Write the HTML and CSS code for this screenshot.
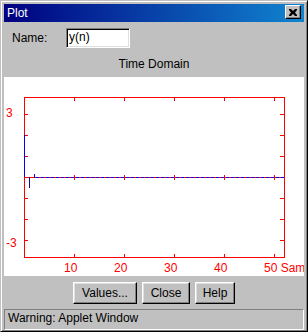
FILE: index.html
```html
<!DOCTYPE html>
<html>
<head>
<meta charset="utf-8">
<link rel="stylesheet" href="styles.css">
</head>
<body>
<div class="window">
  <div class="titlebar">
    <span class="title">Plot</span>
    <span class="close-btn"><svg width="8" height="7" viewBox="0 0 8 7"><path d="M0 0h2l2 2 2-2h2v1L6 3.5 8 6v1H6L4 5 2 7H0V6l2-2.5L0 1z" fill="#000"/></svg></span>
  </div>
  <div class="name-row">
    <span class="name-label">Name:</span>
    <span class="field">y(n)</span>
  </div>
  <div class="heading">Time Domain</div>
  <div class="canvas">
    <svg class="plot" width="300" height="199" viewBox="4 77 300 199">
      <g stroke="#ff0000" stroke-width="1" fill="none" shape-rendering="crispEdges">
        <path d="M24.5 97.5H284.5V257.5H24.5Z"/>
        <path d="M24.5 177.5H284.5"/>
        <path d="M24 114.5h4M24 135.5h4M24 156.5h4M24 198.5h4M24 219.5h4M24 240.5h4"/>
        <path d="M280 114.5h4M280 135.5h4M280 156.5h4M280 198.5h4M280 219.5h4M280 240.5h4"/>
        <path d="M74.5 97v4M124.5 97v4M174.5 97v4M224.5 97v4M274.5 97v4"/>
        <path d="M74.5 254v4M124.5 254v4M174.5 254v4M224.5 254v4M274.5 254v4"/>
        <path d="M74.5 175v5M124.5 175v5M174.5 175v5M224.5 175v5M274.5 175v5"/>
      </g>
      <g stroke="#0000ff" stroke-width="1" fill="none" shape-rendering="crispEdges">
        <path d="M36 177.5H284" stroke-dasharray="3 2"/>
        <path d="M24.5 135V177"/>
        <path d="M29.5 177V188" stroke="#1010a0"/>
        <path d="M34.5 174V178"/>
      </g>
      <g class="labels" fill="#ff0000">
        <text x="6" y="117">3</text>
        <text x="6" y="247">-3</text>
        <text x="64" y="272">10</text>
        <text x="114" y="272">20</text>
        <text x="164" y="272">30</text>
        <text x="214" y="272">40</text>
        <text x="264" y="272">50 Sam</text>
      </g>
    </svg>
  </div>
  <div class="buttons">
    <span class="btn btn-values">Values...</span>
    <span class="btn btn-close">Close</span>
    <span class="btn btn-help">Help</span>
  </div>
  <div class="status">Warning: Applet Window</div>
</div>
</body>
</html>
```
FILE: styles.css
```css
html, body {
  margin: 0;
  padding: 0;
  background: #c0c0c0;
}
body {
  font-family: "Liberation Sans", Arial, sans-serif;
  font-size: 12px;
  color: #000;
}
.window {
  box-sizing: border-box;
  width: 308px;
  height: 332px;
  background: #c0c0c0;
  border: 1px solid;
  border-color: #c0c0c0 #000 #000 #c0c0c0;
  box-shadow: inset 1px 1px #fff, inset -1px -1px #808080;
  padding: 3px 3px 1px 3px;
  display: flex;
  flex-direction: column;
}
.titlebar {
  height: 18px;
  flex: none;
  background: linear-gradient(to right, #000080, #1084d0);
  display: flex;
  align-items: flex-start;
  justify-content: space-between;
  padding: 1px 3px 0 3px;
  box-sizing: border-box;
}
.title {
  color: #fff;
  font-size: 12px;
  line-height: 16px;
}
.close-btn {
  box-sizing: border-box;
  width: 16px;
  height: 14px;
  background: #c0c0c0;
  border: 1px solid;
  border-color: #fff #000 #000 #fff;
  box-shadow: inset -1px -1px #808080;
  display: flex;
  align-items: center;
  justify-content: center;
}
.close-btn svg {
  display: block;
}
.name-row {
  margin-top: 6px;
  height: 20px;
  flex: none;
  display: flex;
  align-items: center;
  padding-left: 8px;
}
.name-label {
  width: 54px;
  line-height: 14px;
}
.field {
  box-sizing: border-box;
  width: 64px;
  height: 20px;
  background: #fff;
  border: 1px solid;
  border-color: #808080 #fff #fff #808080;
  box-shadow: inset 1px 1px #000, inset -1px -1px #dfdfdf;
  padding-left: 2px;
  line-height: 17px;
}
.heading {
  height: 29px;
  flex: none;
  box-sizing: border-box;
  padding-top: 9px;
  line-height: 14px;
  text-align: center;
}
.canvas {
  height: 199px;
  flex: none;
  background: #fff;
}
.plot {
  display: block;
}
.labels text {
  font-family: "Liberation Sans", Arial, sans-serif;
  font-size: 12px;
}
.buttons {
  height: 33px;
  flex: none;
  box-sizing: border-box;
  padding-top: 6px;
  display: flex;
  justify-content: center;
  gap: 5px;
}
.btn {
  box-sizing: border-box;
  height: 22px;
  border: 1px solid;
  border-color: #fff #000 #000 #fff;
  box-shadow: inset -1px -1px #808080, inset 1px 1px #dfdfdf;
  display: flex;
  align-items: center;
  justify-content: center;
  line-height: 14px;
}
.btn-values { width: 64px; }
.btn-close { width: 48px; }
.btn-help { width: 40px; }
.status {
  height: 21px;
  flex: none;
  box-sizing: border-box;
  border: 1px solid;
  border-color: #808080 #fff #fff #808080;
  padding: 0 0 2px 3px;
  line-height: 17px;
}
```
